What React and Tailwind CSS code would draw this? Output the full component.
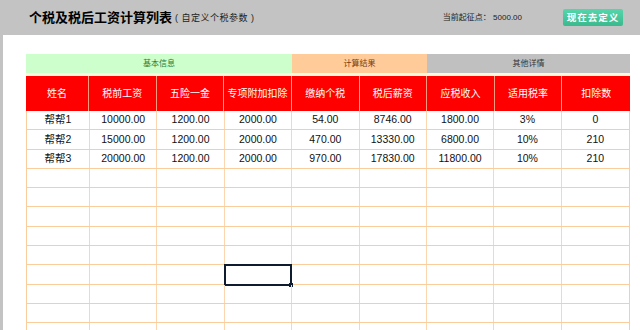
import React from 'react';

const headers = ['姓名', '税前工资', '五险一金', '专项附加扣除', '缴纳个税', '税后薪资', '应税收入', '适用税率', '扣除数'];

const rows = [
  ['帮帮1', '10000.00', '1200.00', '2000.00', '54.00', '8746.00', '1800.00', '3%', '0'],
  ['帮帮2', '15000.00', '1200.00', '2000.00', '470.00', '13330.00', '6800.00', '10%', '210'],
  ['帮帮3', '20000.00', '1200.00', '2000.00', '970.00', '17830.00', '11800.00', '10%', '210'],
];

const emptyRows = 9;
const font = { fontFamily: '"Liberation Sans", "Noto Sans CJK SC", sans-serif' };

export default function App() {
  const allRows = [...rows, ...Array.from({ length: emptyRows }, () => Array(9).fill(''))];

  return (
    <div className="w-[640px] h-[330px] overflow-hidden bg-white text-black" style={font}>
      {/* top bar */}
      <div className="h-[35px] bg-[#c3c3c3] flex items-center pl-[29px] pr-[17px]">
        <span className="text-[13px] font-bold">个税及税后工资计算列表</span>
        <span className="text-[9px] ml-[3px] mt-[2px] text-[#222] tracking-[0.5px]">( 自定义个税参数 )</span>
        <span className="ml-auto text-[8px] text-[#222]">当前起征点： 5000.00</span>
        <button className="ml-[41px] w-[60px] h-[17px] rounded-[2px] bg-gradient-to-b from-[#55d6aa] to-[#3bb98e] text-white text-[9.5px] font-bold tracking-[1px] leading-none">
          现在去定义
        </button>
      </div>

      {/* content */}
      <div className="h-[295px] border-l-[3px] border-[#c3c3c3] pl-[23px] pr-[10px] pt-[19px]">
        <div className="w-[604px]">
          {/* section row */}
          <div className="flex h-[22px] border-b-[3px] border-[#fff7d9] text-[8px]">
            <div className="w-[266px] bg-[#ccffcc] text-[#267a3a] flex items-center justify-center">基本信息</div>
            <div className="w-[135px] bg-[#ffcc99] text-[#7a3e12] flex items-center justify-center">计算结果</div>
            <div className="flex-1 bg-[#c0c0c0] text-[#333] flex items-center justify-center">其他详情</div>
          </div>

          {/* header row */}
          <div className="grid grid-cols-[63px_repeat(8,1fr)] h-[35px] bg-[#ff0000] text-white text-[10px]">
            {headers.map((h, i) => (
              <div key={h} className={`flex items-center justify-center ${i < 8 ? 'border-r border-[#ff9a80]' : ''}`}>
                {h}
              </div>
            ))}
          </div>

          {/* body */}
          <div className="border-l border-r border-[#fbcc9c]">
            {allRows.map((r, ri) => (
              <div key={ri} className="grid grid-cols-[63px_repeat(8,1fr)] h-[19.3px] border-b border-[#fbcc9c] text-[10.5px] text-[#111]">
                {r.map((c, ci) => (
                  <div
                    key={ci}
                    className={`relative flex items-center justify-center ${ci < 8 ? 'border-r border-[#fcd6ae]' : ''}`}
                  >
                    {c}
                    {ri === 8 && ci === 3 && (
                      <div className="absolute -left-[1px] -top-[1px] -right-[1px] -bottom-[2px] border-2 border-[#0f1b2e]">
                        <div className="absolute -right-[3px] -bottom-[3px] w-[4px] h-[4px] bg-[#0f1b2e]" />
                      </div>
                    )}
                  </div>
                ))}
              </div>
            ))}
          </div>
        </div>
      </div>
    </div>
  );
}
